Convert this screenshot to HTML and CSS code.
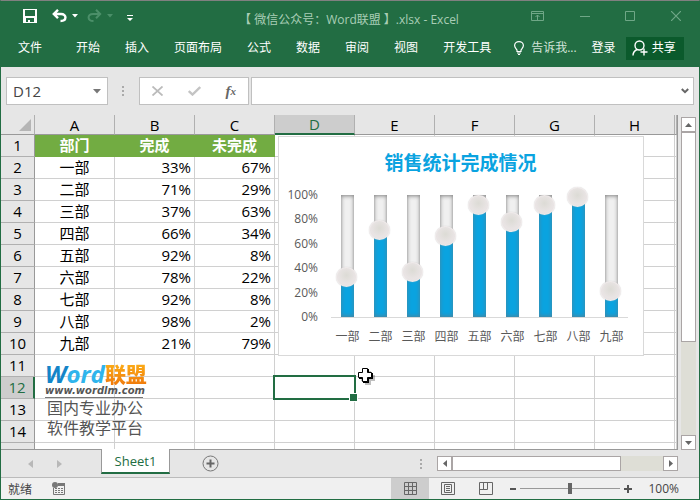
FILE: index.html
```html
<!DOCTYPE html>
<html lang="zh-CN">
<head>
  <meta charset="UTF-8" />
  <title>Word联盟.xlsx - Excel</title>
  <link rel="stylesheet" href="styles.css">
</head>
<body>
  <div class="window">
    <header class="titlebar">
      <div class="qat">
        <button class="icon-btn save" aria-label="保存">
          <svg width="14" height="14" viewBox="0 0 14 14"><path fill="#fff" fill-rule="evenodd" d="M0 0H14V14H0ZM2 1V7H12V1ZM3 9V13H5V11H7V13H11V9Z"/></svg>
        </button>
        <button class="icon-btn" aria-label="撤消">
          <svg width="15" height="14" viewBox="0 0 15 14"><path fill="none" stroke="#fff" stroke-width="2.400" d="M6 .8L1.800 5L6 9.200M2 5H9C15 5 15 12 8.500 12"/></svg>
        </button>
        <button class="icon-btn caret" aria-label="撤消列表">
          <svg width="6" height="4" viewBox="0 0 6 4"><path fill="#fff" d="M0 0H6L3 3.500Z"/></svg>
        </button>
        <button class="icon-btn redo" aria-label="恢复">
          <svg width="15" height="14" viewBox="0 0 15 14"><path fill="none" stroke="#4b8f69" stroke-width="2" d="M9 .8L13.200 5L9 9.200M13 5H6C0 5 0 12 6.500 12"/></svg>
        </button>
        <button class="icon-btn caret" aria-label="恢复列表">
          <svg width="6" height="4" viewBox="0 0 6 4"><path fill="#4b8f69" d="M0 0H6L3 3.500Z"/></svg>
        </button>
        <button class="icon-btn custom" aria-label="自定义快速访问工具栏">
          <svg width="6" height="6" viewBox="0 0 6 6"><path fill="#fff" d="M0 0H6V1H0ZM0 3H6L3 6Z"/></svg>
        </button>
      </div>
      <div class="doc-title">【 微信公众号：Word联盟 】.xlsx - Excel</div>
      <div class="win-buttons">
        <button class="icon-btn" aria-label="功能区显示选项">
          <svg width="13" height="10" viewBox="0 0 13 10"><path fill="none" stroke="#6fa787" d="M.5.5H12.500V9.500H.5ZM.5 2.500H12.500M6.500 9V4M4.500 6L6.500 4L8.500 6"/></svg>
        </button>
        <button class="icon-btn" aria-label="最小化">
          <svg width="10" height="10" viewBox="0 0 10 10"><path stroke="#6fa787" d="M0 5.500H10"/></svg>
        </button>
        <button class="icon-btn" aria-label="最大化">
          <svg width="10" height="10" viewBox="0 0 10 10"><path fill="none" stroke="#6fa787" d="M.5.5H9.500V9.500H.5Z"/></svg>
        </button>
        <button class="icon-btn" aria-label="关闭">
          <svg width="10" height="10" viewBox="0 0 10 10"><path stroke="#6fa787" stroke-width="1.200" d="M0 0L10 10M10 0L0 10"/></svg>
        </button>
      </div>
    </header>

    <nav class="ribbon">
      <button class="tab file">文件</button>
      <button class="tab">开始</button>
      <button class="tab">插入</button>
      <button class="tab">页面布局</button>
      <button class="tab">公式</button>
      <button class="tab">数据</button>
      <button class="tab">审阅</button>
      <button class="tab">视图</button>
      <button class="tab">开发工具</button>
      <button class="tab tell">
        <svg width="10" height="14" viewBox="0 0 10 14"><path fill="none" stroke="#fff" stroke-width="1.200" d="M3 10.500V9C2 7.500.6 6.500.6 4.600A4.400 4 0 0 1 9.400 4.600C9.400 6.500 8 7.500 7 9V10.500ZM3 12H7M4 13.500H6"/></svg>
        告诉我...
      </button>
      <button class="tab login">登录</button>
      <button class="tab share">
        <svg width="16" height="16" viewBox="0 0 16 16"><circle cx="7.500" cy="5.500" r="4.500" fill="none" stroke="#fff" stroke-width="1.400"/><path fill="none" stroke="#fff" stroke-width="1.400" d="M1 15.500C1 12 3 10.500 5 9.500M12 8.500V15.500M8.500 12H15.500"/></svg>
        共享
      </button>
    </nav>

    <div class="formula-bar">
      <div class="name-box">
        <input type="text" value="D12" aria-label="名称框">
        <svg width="8" height="5" viewBox="0 0 8 5"><path fill="#777" d="M0 0H8L4 4.500Z"/></svg>
      </div>
      <svg class="grip" width="2" height="10" viewBox="0 0 2 10"><path fill="#aaa" d="M0 0H2V2H0ZM0 4H2V6H0ZM0 8H2V10H0Z"/></svg>
      <div class="fx-box">
        <button class="icon-btn" aria-label="取消">
          <svg width="11" height="10" viewBox="0 0 11 10"><path stroke="#bbb" stroke-width="1.800" d="M.5.5L10.500 9.500M10.500.5L.5 9.500"/></svg>
        </button>
        <button class="icon-btn" aria-label="输入">
          <svg width="13" height="10" viewBox="0 0 13 10"><path fill="none" stroke="#c4c4c4" stroke-width="2.400" d="M.8 5L4.500 8.500L12.200 1"/></svg>
        </button>
        <button class="icon-btn fx" aria-label="插入函数">f<sub>x</sub></button>
      </div>
      <div class="fx-input">
        <input type="text" aria-label="编辑栏">
        <svg width="8" height="6" viewBox="0 0 8 6"><path fill="none" stroke="#666" stroke-width="2" d="M.8 1L4 4.200L7.200 1"/></svg>
      </div>
    </div>

    <main class="work">
      <div class="sheet">
        <table class="grid">
          <colgroup>
            <col class="col-head"><col class="col"><col class="col"><col class="col"><col class="col"><col class="col"><col class="col"><col class="col"><col class="col"><col>
          </colgroup>
          <thead>
            <tr>
              <th class="corner"><svg width="12" height="12" viewBox="0 0 12 12"><path fill="#b5b5b5" d="M12 0V12H0Z"/></svg></th>
              <th>A</th><th>B</th><th>C</th><th class="active">D</th><th>E</th><th>F</th><th>G</th><th>H</th><th></th>
            </tr>
          </thead>
          <tbody id="rows"></tbody>
        </table>

        <section class="chart">
          <h2>销售统计完成情况</h2>
          <div class="plot">
            <div class="axis"><span>100%</span><span>80%</span><span>60%</span><span>40%</span><span>20%</span><span>0%</span></div>
            <div class="bars" id="bars"></div>
          </div>
          <div class="cats" id="cats"></div>
        </section>

        <div class="logo">
          <div class="logo-name"><span class="w1">W</span><span class="w2">ord</span><b>联盟</b></div>
          <div class="logo-url">www.wordlm.com</div>
          <div class="logo-text">国内专业办公<br>软件教学平台</div>
        </div>

        <svg class="cursor" width="20" height="20" viewBox="0 0 20 20"><path fill="#000" opacity=".25" d="M7 3H13V7H17V13H13V17H7V13H3V7H7Z"/><path fill="#000" d="M5 1H11V5H15V11H11V15H5V11H1V5H5Z"/><path fill="#fff" stroke="#000" d="M4.500.5H9.500V4.500H13.500V9.500H9.500V13.500H4.500V9.500H.5V4.500H4.500Z"/></svg>
      </div>

      <div class="vscroll">
        <button class="sbtn" aria-label="向上"><svg width="7" height="4" viewBox="0 0 7 4"><path fill="#666" d="M0 4H7L3.500 0Z"/></svg></button>
        <div class="vthumb"></div>
        <div class="track"></div>
        <button class="sbtn" aria-label="向下"><svg width="7" height="4" viewBox="0 0 7 4"><path fill="#666" d="M0 0H7L3.500 4Z"/></svg></button>
      </div>
    </main>

    <div class="sheet-tabs">
      <div class="tab-nav">
        <button class="icon-btn" aria-label="上一个"><svg width="5" height="8" viewBox="0 0 5 8"><path fill="#b8b8b8" d="M5 0V8L0 4Z"/></svg></button>
        <button class="icon-btn" aria-label="下一个"><svg width="5" height="8" viewBox="0 0 5 8"><path fill="#b8b8b8" d="M0 0V8L5 4Z"/></svg></button>
      </div>
      <button class="sheet-tab">Sheet1</button>
      <button class="icon-btn add" aria-label="新工作表">
        <svg width="17" height="17" viewBox="0 0 17 17"><circle cx="8.500" cy="8.500" r="7.500" fill="none" stroke="#777"/><path stroke="#666" stroke-width="2" d="M8.500 4.500V12.500M4.500 8.500H12.500"/></svg>
      </button>
      <svg class="grip" width="2" height="10" viewBox="0 0 2 10"><path fill="#aaa" d="M0 0H2V2H0ZM0 4H2V6H0ZM0 8H2V10H0Z"/></svg>
      <div class="hscroll">
        <button class="sbtn" aria-label="向左"><svg width="4" height="7" viewBox="0 0 4 7"><path fill="#666" d="M4 0V7L0 3.500Z"/></svg></button>
        <div class="hthumb"></div>
        <div class="track"></div>
        <button class="sbtn" aria-label="向右"><svg width="4" height="7" viewBox="0 0 4 7"><path fill="#666" d="M0 0V7L4 3.500Z"/></svg></button>
      </div>
    </div>

    <footer class="status">
      <span>就绪</span>
      <button class="icon-btn macro" aria-label="录制宏">
        <svg width="13" height="13" viewBox="0 0 13 13"><path fill="none" stroke="#777" d="M1.500 6V12.500H12.500V1.500H6"/><path fill="#777" d="M6 1H13V4H6ZM3 6H5V7H3ZM6 6H8V7H6ZM9 6H11V7H9ZM3 8H5V9H3ZM6 8H8V9H6ZM9 8H11V9H9ZM3 10H5V11H3ZM6 10H8V11H6ZM9 10H11V11H9Z"/><circle cx="3" cy="3" r="3" fill="#777"/></svg>
      </button>
      <div class="views">
        <button class="view on" aria-label="普通">
          <svg width="13" height="13" viewBox="0 0 13 13"><path fill="none" stroke="#666" d="M.5.5H12.500V12.500H.5ZM4.500 0V13M8.500 0V13M0 4.500H13M0 8.500H13"/></svg>
        </button>
        <button class="view" aria-label="页面布局">
          <svg width="14" height="13" viewBox="0 0 14 13"><path fill="none" stroke="#666" d="M.5.5H13.500V12.500H.5ZM3.500 2.500H10.500V10.500H3.500ZM5 4.500H9M5 6.500H9M5 8.500H9"/></svg>
        </button>
        <button class="view" aria-label="分页预览">
          <svg width="14" height="13" viewBox="0 0 14 13"><path fill="none" stroke="#666" d="M.5.5H13.500V12.500H.5ZM.5 7.500H8.500V.5M4.500 .5V7.500"/></svg>
        </button>
      </div>
      <div class="zoom">
        <button class="icon-btn" aria-label="缩小"><svg width="6" height="8" viewBox="0 0 6 8"><path fill="#555" d="M0 3H6V5H0Z"/></svg></button>
        <input type="range" min="0" max="200" value="100" aria-label="显示比例">
        <button class="icon-btn" aria-label="放大"><svg width="8" height="8" viewBox="0 0 8 8"><path fill="#555" d="M3 0H5V3H8V5H5V8H3V5H0V3H3Z"/></svg></button>
        <span>100%</span>
      </div>
    </footer>
  </div>

  <script>
    const data = [
      ['一部', 33], ['二部', 71], ['三部', 37], ['四部', 66], ['五部', 92],
      ['六部', 78], ['七部', 92], ['八部', 98], ['九部', 21]
    ];
    const $ = id => document.getElementById(id);

    // 第 1 行是表头，第 2-10 行是数据，其余为空行
    let html = '';
    for (let r = 1; r <= 15; r++) {
      let cells = ['', '', ''];
      if (r === 1) cells = ['部门', '完成', '未完成'];
      const d = data[r - 2];
      if (d) cells = [d[0], d[1] + '%', (100 - d[1]) + '%'];
      html += `<tr class="${r === 1 ? 'title-row' : ''}"><th class="${r === 12 ? 'active' : ''}">${r}</th>`;
      html += cells.map((c, i) => `<td class="${i && d ? 'num' : ''}">${c}</td>`).join('');
      html += `<td class="${r === 12 ? 'selected' : ''}"></td>` + '<td></td>'.repeat(5) + '</tr>';
    }
    $('rows').innerHTML = html;

    $('bars').innerHTML = data.map(d =>
      `<div class="bar"><div class="fill" style="height:${d[1]}%"><i class="knob"></i></div></div>`).join('');
    $('cats').innerHTML = data.map(d => `<span>${d[0]}</span>`).join('');
  </script>
</body>
</html>
```

FILE: styles.css
```css
* { box-sizing: border-box; }
body { margin: 0; font-family: "Open Sans", "Noto Sans CJK SC", sans-serif; font-size: 12px; color: #444; }
button, input { font: inherit; color: inherit; border: none; background: none; padding: 0; margin: 0; }
svg { display: block; flex: none; }
.window { display: flex; flex-direction: column; height: 100vh; min-height: 400px; background: #e6e6e6; border: 1px solid #226d43; border-top-color: #808080; overflow: hidden; }
.icon-btn { display: flex; align-items: center; justify-content: center; flex: none; }

/* title bar */
.titlebar { display: flex; align-items: center; height: 30px; padding: 0 18px 0 22px; background: #226d43; }
.qat { display: flex; align-items: center; width: 144px; }
.qat .caret { margin-left: 5px; }
.qat .redo { margin-left: 9px; }
.qat .custom { margin: 3px 0 0 14px; }
.qat .save { margin-right: 15px; }
.doc-title { flex: 1; text-align: center; color: #a9cdb6; white-space: nowrap; padding: 5px 0 0 24px; }
.win-buttons { display: flex; justify-content: space-between; width: 150px; margin-left: 24px; }

.ribbon { display: flex; align-items: center; height: 36px; padding: 0 16px 2px 17px; gap: 25px; background: #226d43; color: #fff; flex: none; }
.tab { white-space: nowrap; line-height: 22px; }
.tab.file { margin-right: 9px; }
.tell, .share { display: flex; align-items: center; }
.tell { gap: 7px; margin-left: -2px; margin-right: -10px; color: #d3e4da; }
.share { gap: 4px; height: 23px; padding: 0 8px 0 6px; margin-left: -15px; background: #0b5a2c; }

/* formula bar */
.formula-bar { display: flex; align-items: center; height: 48px; padding: 0 5px; flex: none; }
.name-box, .fx-box, .fx-input { display: flex; align-items: center; height: 28px; background: #fff; border: 1px solid #c0c0c0; }
.name-box { width: 102px; padding: 0 6px; }
.name-box input { flex: 1; min-width: 0; font-size: 15px; }
.formula-bar .grip { margin: 0 15px 0 14px; }
.fx-box { width: 110px; justify-content: space-between; padding: 0 12px; }
.fx { font-family: "Liberation Serif", serif; font-style: italic; font-weight: bold; font-size: 15px; line-height: 16px; color: #666; }
.fx sub { font-size: 11px; line-height: 8px; }
.fx-input { flex: 1; margin-left: 2px; padding: 0 4px; }
.fx-input input { flex: 1; min-width: 0; }

/* sheet */
.work { display: flex; flex: 1; min-height: 0; }
.sheet { position: relative; flex: 1; min-width: 0; overflow: hidden; border-right: 1px solid #999; border-bottom: 1px solid #999; }
.grid { width: 100%; table-layout: fixed; border-collapse: separate; border-spacing: 0; font-size: 15px; color: #000; background: #fff; }
.col-head { width: 34px; }
.col { width: 80px; }
.grid th, .grid td { height: 22px; padding: 0 0 1px; line-height: 19px; font-weight: normal; text-align: center; white-space: nowrap; border-right: 1px solid #d0d0d0; border-bottom: 1px solid #d0d0d0; }
.grid th { background: #e6e6e6; border-right-color: #999; border-bottom-color: #b0b0b0; }
.grid thead th { height: 20px; padding: 0; line-height: 18px; border-right-color: #b0b0b0; border-bottom-color: #999; }
.grid .corner svg { margin-left: 18px; }
.grid td.num { text-align: right; padding-right: 3px; }
.grid th.active { background: #cdcdcd; color: #226d43; }
.grid thead th.active { border-bottom: 2px solid #226d43; }
.grid tbody th.active { border-right: 2px solid #226d43; }
.title-row td:nth-child(-n+4) { background: #72ac42; border-color: #72ac42; color: #fff; font-weight: bold; }
.selected { position: relative; }
.selected::before { content: ""; position: absolute; inset: -2px; border: 2px solid #226d43; }
.selected::after { content: ""; position: absolute; right: -4px; bottom: -4px; width: 7px; height: 7px; background: #226d43; border: 1px solid #fff; }

/* chart */
.chart { position: absolute; left: 277px; top: 21px; width: 366px; height: 220px; padding: 12px 15px 0 8px; background: #fff; border: 1px solid #d9d9d9; color: #595959; }
.chart h2 { margin: 0 0 18px; padding-left: 6px; font-size: 19px; line-height: 28px; text-align: center; color: #0aa3e0; }
.plot { display: flex; gap: 13px; }
.axis { display: flex; flex-direction: column; justify-content: space-between; width: 31px; height: 138px; margin: -8px 0; line-height: 16px; text-align: right; }
.bars { display: flex; flex: 1; height: 123px; border-bottom: 1px solid #d9d9d9; justify-content: space-around; }
.bar { display: flex; align-items: flex-end; width: 13px; background: #f0f0f0; box-shadow: inset 0 1px 4px #888, inset 0 0 2px #bbb; }
.fill { position: relative; width: 100%; background: #0aa3e0; box-shadow: inset 0 -1px 4px #4f8299; }
.knob { position: absolute; left: -5px; top: -10px; width: 21px; height: 20px; border-radius: 50%; background: radial-gradient(circle at 50% 40%, #dcdbd5, #e9e4e4 60%, #e6e1e1); border: 1px solid #efeaea; box-shadow: 0 0 1px #bbb; }
.cats { display: flex; margin: 9px 0 0 44px; line-height: 20px; }
.cats span { flex: 1; text-align: center; white-space: nowrap; }

/* logo */
.logo { position: absolute; left: 44px; top: 247px; color: #555; }
.logo-name { display: flex; align-items: center; height: 24px; line-height: 22px; font-size: 24px; font-weight: bold; font-style: italic; color: #2fb4ec; }
.logo-name .w1 { color: #1485c8; }
.logo-name b { font-size: 21px; font-style: normal; background: linear-gradient(#fcae17, #f07a0c); -webkit-background-clip: text; background-clip: text; color: transparent; }
.logo-url { width: 98px; height: 12px; font-family: "DejaVu Sans", sans-serif; font-size: 10px; line-height: 10px; font-style: italic; font-weight: bold; border-bottom: 1px solid #777; }
.logo-text { font-size: 16px; line-height: 20px; padding-left: 2px; }
.cursor { position: absolute; left: 357px; top: 253px; }

/* scroll bars */
.vscroll { display: flex; flex-direction: column; width: 15px; margin: 2px 3px 0; }
.hscroll { display: flex; width: 241px; height: 15px; }
.sbtn { display: flex; align-items: center; justify-content: center; flex: none; width: 15px; height: 15px; background: #fff; border: 1px solid #aaa5a5; }
.vthumb { flex: 9 1 0; background: #fff; border: 1px solid #aaa5a5; }
.vscroll .track { flex: 4 1 0; }
.hthumb { flex: 4 1 0; background: #fff; border: 1px solid #aaa5a5; }
.track { flex: 1 1 0; background: #deded6; }

.sheet-tabs { display: flex; align-items: center; height: 27px; padding-right: 21px; flex: none; }
.tab-nav { display: flex; gap: 24px; width: 100px; padding-left: 27px; }
.sheet-tab { width: 69px; height: 25px; align-self: flex-start; margin-top: -1px; position: relative; font-size: 13px; line-height: 22px; color: #226d43; background: #fff; border: 1px solid #999; border-top: none; border-bottom: 2px solid #226d43; }
.add { margin-left: 32px; margin-right: auto; }
.sheet-tabs .grip { margin-right: 15px; }

/* status bar */
.status { display: flex; align-items: center; height: 22px; padding: 0 20px 0 7px; background: #f0f0f0; border-top: 1px solid #bbb; flex: none; }
.macro { margin-left: 20px; }
.views { display: flex; margin-left: auto; height: 100%; }
.view { display: flex; align-items: center; justify-content: center; width: 38px; }
.view.on { background: #cdcdcd; }
.zoom { display: flex; align-items: center; margin-left: 5px; gap: 4px; }
.zoom span { margin-left: 12px; }
.zoom input { -webkit-appearance: none; appearance: none; width: 100px; height: 12px; background: linear-gradient(#999, #999) center / 100% 1px no-repeat; }
.zoom input::-webkit-slider-thumb { -webkit-appearance: none; width: 4px; height: 11px; background: #666; }
```
